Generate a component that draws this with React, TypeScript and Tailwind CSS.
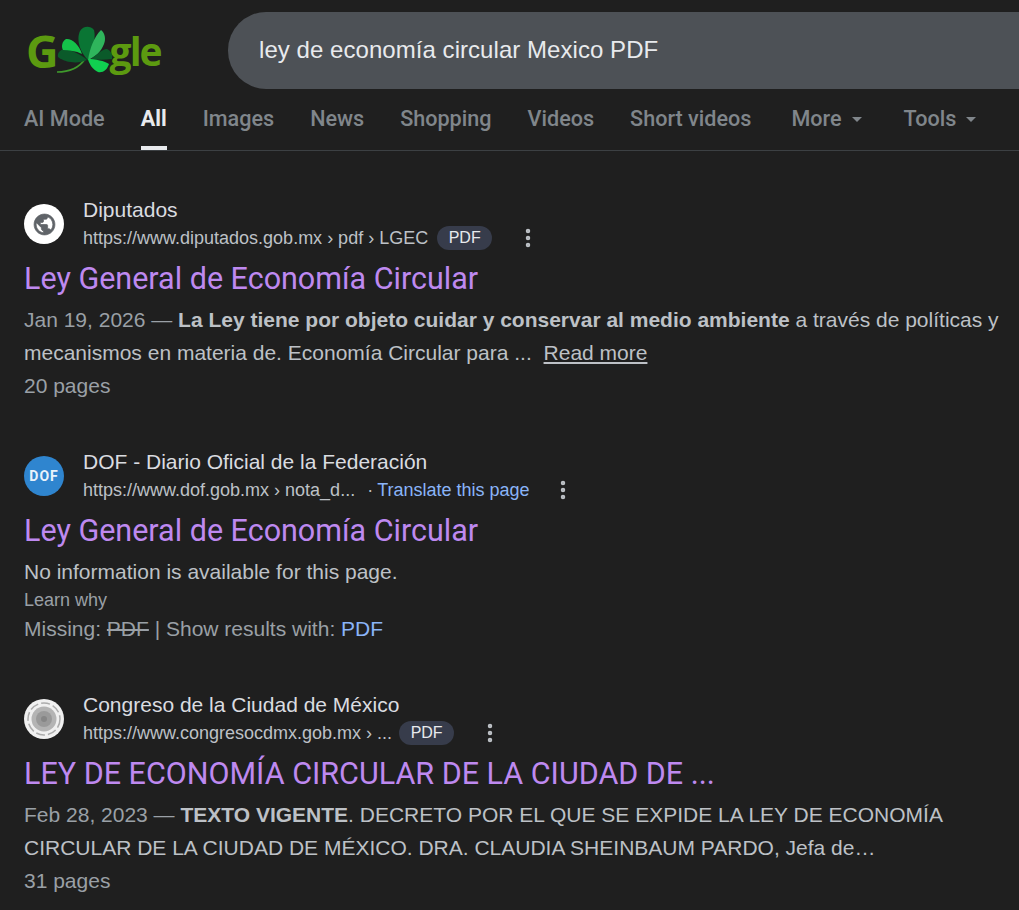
import React from 'react';
import { MoreVertical } from 'lucide-react';

const tabs = ['AI Mode', 'All', 'Images', 'News', 'Shopping', 'Videos', 'Short videos'];

const Clover = () => (
  <svg viewBox="0 0 56 50" className="w-14 h-[50px] shrink-0 -ml-[1px]">
    <path d="M0 46 C12 46 22 42 28 33" fill="none" stroke="#3f9a2c" strokeWidth="1.6" />
    <path d="M30 34 C22 38 8 37 1 31 C0 27 3 24 7 23 C14 24 24 28 30 34Z" fill="#0b5a2a" />
    <path d="M25 28 C22 18 14 12 9 13 C5 15 4 21 6 24 C12 24 19 25 25 28Z" fill="#14c24a" />
    <path d="M31 34 C23 26 19 14 23 5 C26 0 33 -1 37 4 C39 12 36 24 31 34Z" fill="#0a7534" />
    <path d="M31 34 C33 22 37 11 44 4 C48 7 49 13 47 18 C44 26 38 31 31 34Z" fill="#2fb55c" />
    <path d="M34 33 C40 28 47 22 50 23 C54 25 56 29 55 33 C48 34 40 34 34 33Z" fill="#0b5a2a" />
    <path d="M31 33 C38 33 48 35 52 38 C50 44 46 47 41 46 C36 44 32 38 31 33Z" fill="#10cf50" />
  </svg>
);

const Logo = () => (
  <div className="flex items-center w-[135px] h-[50px] text-[#5c9a10] font-bold text-[45px] leading-none [font-family:'Open_Sans',sans-serif]">
    <span className="tracking-[-1px]">G</span>
    <Clover />
    <span className="text-[39px] tracking-[-2px] -ml-[3px]">gle</span>
  </div>
);

const Badge = ({ className }: { className: string }) => (
  <span className={`h-6 w-[55px] text-center rounded-full bg-[#373c4b] text-[#e8eaed] text-[16px] leading-6 ${className}`}>PDF</span>
);

const Kebab = ({ className }: { className: string }) => (
  <MoreVertical className={`w-6 h-6 text-[#bdc1c6] ${className}`} strokeWidth={2.5} />
);

const Caret = () => (
  <span className="mb-[11px] border-x-[5px] border-t-[5px] border-x-transparent border-t-[#80868b]" />
);

const Globe = () => (
  <div className="w-10 h-10 rounded-full bg-white flex items-center justify-center">
    <svg viewBox="0 0 24 24" className="w-[25px] h-[25px] fill-[#5f6368] stroke-[#5f6368] stroke-[0.7]">
      <path d="M12 2C6.48 2 2 6.48 2 12s4.48 10 10 10 10-4.48 10-10S17.52 2 12 2zm-1 17.93c-3.95-.49-7-3.85-7-7.93 0-.62.08-1.21.21-1.79L9 15v1c0 1.1.9 2 2 2v1.93zm6.9-2.54c-.26-.81-1-1.39-1.9-1.39h-1v-3c0-.55-.45-1-1-1H8v-2h2c.55 0 1-.45 1-1V7h2c1.1 0 2-.9 2-2v-.41c2.93 1.19 5 4.06 5 7.41 0 2.08-.8 3.97-2.1 5.39z" />
    </svg>
  </div>
);

const DofIcon = () => (
  <div className="w-10 h-10 rounded-full bg-[#2f85cf] flex items-center justify-center text-[#e8f2fb] font-bold text-[14px] tracking-[1px] [font-family:'Roboto',sans-serif]">DOF</div>
);

const CongresoIcon = () => (
  <svg viewBox="0 0 40 40" className="w-10 h-10">
    <circle cx="20" cy="20" r="20" fill="#f0f0f0" />
    <circle cx="20" cy="20" r="16" fill="none" stroke="#8f8f8f" strokeWidth="1.5" strokeDasharray="9 3" opacity="0.7" />
    <circle cx="20" cy="20" r="12.5" fill="#b4b4b4" />
    <circle cx="20" cy="20" r="8" fill="#9a9a9a" />
    <circle cx="20" cy="20" r="3" fill="#868686" />
  </svg>
);

interface ResultHeadProps {
  icon: React.ReactNode;
  site: string;
  children: React.ReactNode;
  title: string;
}

const ResultHead = ({ icon, site, children, title }: ResultHeadProps) => (
  <div>
    <div className="flex gap-[19px] items-center h-14">
      {icon}
      <div>
        <div className="text-[21px] leading-7 text-[#dadce0]">{site}</div>
        <div className="flex items-center h-7 text-[#bdc1c6] text-[18px]">{children}</div>
      </div>
    </div>
    <h3 className="mt-[7px] text-[30.5px] leading-[40px] text-[#be89f0] [font-family:'Roboto',sans-serif]">{title}</h3>
  </div>
);

export default function App() {
  return (
    <div className="w-[1019px] h-[910px] overflow-hidden bg-[#1f1f1f] text-[#bdc1c6] [font-family:'Liberation_Sans',Arial,sans-serif]">
      <header className="h-[151px] border-b border-[#3c4043]">
        <div className="flex items-center pt-3">
          <div className="w-[228px] pl-[26px] shrink-0"><Logo /></div>
          <div className="h-[77px] w-[900px] shrink-0 rounded-[38px] bg-[#4d5156] pl-[31px] pb-[1px] flex items-center text-[24px] tracking-[0.05px] text-[#e8eaed]">
            ley de economía circular Mexico PDF
          </div>
        </div>
        <nav className="flex gap-9 pl-6 h-[61px] text-[21.6px] text-[#80868b] font-medium [font-family:'Roboto',sans-serif]">
          {tabs.map(t => (
            <div key={t} className={`flex flex-col justify-end ${t === 'All' ? 'text-[#e8eaed] font-bold border-b-4 border-[#e8eaed]' : 'border-b-4 border-transparent'}`}>
              <span className="pb-[13px] leading-7">{t}</span>
            </div>
          ))}
          <div className="flex items-end gap-2.5 pb-[17px] leading-7 ml-1">More <Caret /></div>
          <div className="flex items-end gap-2.5 pb-[17px] leading-7 ml-[6px]">Tools <Caret /></div>
        </nav>
      </header>

      <main className="pl-6 pt-[45px] text-[21px] leading-[33px]">
        <section>
          <ResultHead icon={<Globe />} site="Diputados" title="Ley General de Economía Circular">
            https://www.diputados.gob.mx › pdf › LGEC
            <Badge className="ml-[9px]" />
            <Kebab className="ml-6" />
          </ResultHead>
          <p className="mt-[4px] w-[990px]"><span className="text-[#9aa0a6]">Jan 19, 2026 — </span><b className="text-[#bdc1c6]">La Ley tiene por objeto cuidar y conservar al medio ambiente</b> a través de políticas y mecanismos en materia de. Economía Circular para ... <span className="underline text-[#bdc1c6] ml-[6px]">Read more</span></p>
          <p className="text-[#9aa0a6]">20 pages</p>
        </section>

        <section className="mt-[46px]">
          <ResultHead icon={<DofIcon />} site="DOF - Diario Oficial de la Federación" title="Ley General de Economía Circular">
            https://www.dof.gob.mx › nota_d...
            <span className="ml-3 mr-1">·</span><span className="text-[#8ab4f8]">Translate this page</span>
            <Kebab className="ml-[21px]" />
          </ResultHead>
          <p className="mt-[4px]">No information is available for this page.</p>
          <p className="text-[18px] leading-[24px] text-[#9aa0a6]">Learn why</p>
          <p className="text-[#9aa0a6]">Missing: <s>PDF</s> | Show results with: <span className="text-[#8ab4f8]">PDF</span></p>
        </section>

        <section className="mt-[46px]">
          <ResultHead icon={<CongresoIcon />} site="Congreso de la Ciudad de México" title="LEY DE ECONOMÍA CIRCULAR DE LA CIUDAD DE ...">
            https://www.congresocdmx.gob.mx › ...
            <Badge className="ml-[7px]" />
            <Kebab className="ml-6" />
          </ResultHead>
          <p className="mt-[4px] w-[990px]"><span className="text-[#9aa0a6]">Feb 28, 2023 — </span><b>TEXTO VIGENTE</b>. DECRETO POR EL QUE SE EXPIDE LA LEY DE ECONOMÍA CIRCULAR DE LA CIUDAD DE MÉXICO. DRA. CLAUDIA SHEINBAUM PARDO, Jefa de…</p>
          <p className="text-[#9aa0a6]">31 pages</p>
        </section>
      </main>
    </div>
  );
}
